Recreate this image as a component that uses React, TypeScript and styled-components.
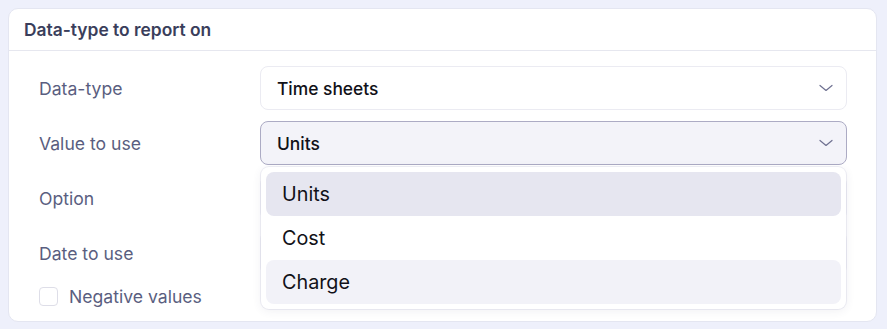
import React from "react";
import styled, { createGlobalStyle } from "styled-components";

const Global = createGlobalStyle`
  html, body { margin: 0; padding: 0; background: #eef0fb; }
  body { font-family: Inter, "Noto Sans", sans-serif; -webkit-font-smoothing: antialiased; }
  * { box-sizing: border-box; }
`;

const Page = styled.div`
  padding: 8px 10px 7px 8px;
`;

const Card = styled.section`
  background: #fff;
  border: 1px solid #e4e6f1;
  border-radius: 10px;
  height: 314px;
  display: flex;
  flex-direction: column;
`;

const Header = styled.header`
  height: 42px;
  display: flex;
  align-items: center;
  padding: 0 15px;
  border-bottom: 1px solid #e6e7ef;
  font-size: 17.4px;
  font-weight: 600;
  color: #3a3e5b;
`;

const Body = styled.div`
  padding: 15px 29px 0 30px;
  display: flex;
  flex-direction: column;
`;

const Form = styled.div`
  display: grid;
  grid-template-columns: 221px 1fr;
  grid-auto-rows: 44px;
  row-gap: 11px;
  align-items: center;
`;

const Label = styled.div`
  font-size: 17.6px;
  color: #5a5e80;
`;

const Field = styled.div`
  position: relative;
  height: 44px;
`;

const Select = styled.div<{ $open?: boolean }>`
  height: 44px;
  display: flex;
  align-items: center;
  justify-content: space-between;
  padding: 0 13px 0 16px;
  border-radius: 8px;
  border: 1px solid ${(p) => (p.$open ? "#acabc4" : "#ebebf2")};
  background: ${(p) => (p.$open ? "#f3f3f9" : "#fff")};
  font-size: 17.4px;
  font-weight: 500;
  color: #111118;
`;

const Menu = styled.ul`
  position: absolute;
  top: 46px;
  left: 1px;
  right: 1px;
  margin: 0;
  padding: 5px;
  list-style: none;
  background: #fff;
  border-radius: 8px;
  box-shadow: 0 2px 10px rgba(60, 60, 100, 0.08), 0 0 0 1px rgba(230, 230, 240, 0.6);
  display: flex;
  flex-direction: column;
  z-index: 5;
`;

const Item = styled.li<{ $tone?: "active" | "hover" }>`
  height: 44px;
  display: flex;
  align-items: center;
  padding: 0 16px;
  border-radius: 8px;
  font-size: 19.8px;
  color: #111118;
  background: ${(p) =>
    p.$tone === "active" ? "#e6e6f0" : p.$tone === "hover" ? "#f2f2f8" : "transparent"};
`;

const CheckRow = styled.label`
  display: flex;
  align-items: center;
  gap: 11px;
  margin-top: 11px;
  font-size: 17.6px;
  color: #5a5e80;
`;

const Box = styled.span`
  width: 19px;
  height: 19px;
  border: 1px solid #dedee8;
  border-radius: 4px;
  background: #fff;
`;

const Chevron = () => (
  <svg width="14" height="8" viewBox="0 0 14 8" fill="none" stroke="#6e7090" strokeWidth="1.2" strokeLinecap="round" strokeLinejoin="round">
    <path d="M1 1.5l6 5 6-5" />
  </svg>
);

export default function App() {
  return (
    <>
      <Global />
      <Page>
        <Card>
          <Header>Data-type to report on</Header>
          <Body>
            <Form>
              <Label>Data-type</Label>
              <Field>
                <Select>
                  <span>Time sheets</span>
                  <Chevron />
                </Select>
              </Field>
              <Label>Value to use</Label>
              <Field>
                <Select $open>
                  <span>Units</span>
                  <Chevron />
                </Select>
                <Menu>
                  <Item $tone="active">Units</Item>
                  <Item>Cost</Item>
                  <Item $tone="hover">Charge</Item>
                </Menu>
              </Field>
              <Label>Option</Label>
              <Field>
                <Select>
                  <span />
                  <Chevron />
                </Select>
              </Field>
              <Label>Date to use</Label>
              <Field>
                <Select>
                  <span />
                  <Chevron />
                </Select>
              </Field>
            </Form>
            <CheckRow>
              <Box />
              Negative values
            </CheckRow>
          </Body>
        </Card>
      </Page>
    </>
  );
}
